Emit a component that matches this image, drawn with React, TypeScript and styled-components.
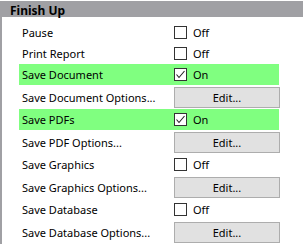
import React from "react";
import styled, { createGlobalStyle } from "styled-components";

const Global = createGlobalStyle`
  html, body { margin: 0; padding: 0; background: #ffffff; }
  body { font-family: "Noto Sans", "Liberation Sans", sans-serif; font-size: 11px; color: #000; }
`;

const Panel = styled.div`
  width: 306px;
  height: 245px;
  overflow: hidden;
  padding-top: 1px;
  box-sizing: border-box;
`;

const Header = styled.div`
  height: 16px;
  width: 303px;
  background: #a0a0a4;
  font-weight: bold;
  font-size: 12px;
  line-height: 20px;
  padding-left: 10px;
  box-sizing: border-box;
`;

const Body = styled.div`
  border-left: 2px solid #a0a0a4;
  padding: 5px 0 0 17px;
  display: flex;
  flex-direction: column;
`;

const Row = styled.div<{ $on?: boolean; $button?: boolean }>`
  display: grid;
  grid-template-columns: 155px 106px;
  align-items: center;
  height: ${(p) => (p.$button ? 24 : 21)}px;
  width: 260px;
  background: ${(p) => (p.$on ? "#80ff80" : "transparent")};
`;

const Label = styled.span`
  padding-left: 3px;
  white-space: nowrap;
  overflow: hidden;
`;

const CheckWrap = styled.span`
  display: flex;
  align-items: center;
  gap: 6px;
`;

const Box = styled.span`
  width: 13px;
  height: 13px;
  box-sizing: border-box;
  border: 1px solid #333333;
  background: #ffffff;
  display: flex;
  align-items: center;
  justify-content: center;
`;

const EditButton = styled.button`
  width: 106px;
  height: 21px;
  box-sizing: border-box;
  border: 1px solid #adadad;
  background: #e1e1e1;
  font-family: inherit;
  font-size: 11px;
  color: #000;
  padding: 0;
  line-height: 19px;
`;

type Item = { label: string; kind: "check" | "button"; on?: boolean };

const items: Item[] = [
  { label: "Pause", kind: "check" },
  { label: "Print Report", kind: "check" },
  { label: "Save Document", kind: "check", on: true },
  { label: "Save Document Options...", kind: "button" },
  { label: "Save PDFs", kind: "check", on: true },
  { label: "Save PDF Options...", kind: "button" },
  { label: "Save Graphics", kind: "check" },
  { label: "Save Graphics Options...", kind: "button" },
  { label: "Save Database", kind: "check" },
  { label: "Save Database Options...", kind: "button" },
];

const Check = ({ on }: { on?: boolean }) => (
  <CheckWrap>
    <Box>
      {on && (
        <svg width="11" height="11" viewBox="0 0 11 11">
          <polyline points="1.5,5.5 4,8.5 9.5,2" fill="none" stroke="#222" strokeWidth="1.1" />
        </svg>
      )}
    </Box>
    <span>{on ? "On" : "Off"}</span>
  </CheckWrap>
);

export default function App() {
  return (
    <>
      <Global />
      <Panel>
        <Header>Finish Up</Header>
        <Body>
          {items.map((it) => (
            <Row key={it.label} $on={it.on} $button={it.kind === "button"}>
              <Label>{it.label}</Label>
              {it.kind === "check" ? <Check on={it.on} /> : <EditButton>Edit...</EditButton>}
            </Row>
          ))}
        </Body>
      </Panel>
    </>
  );
}
